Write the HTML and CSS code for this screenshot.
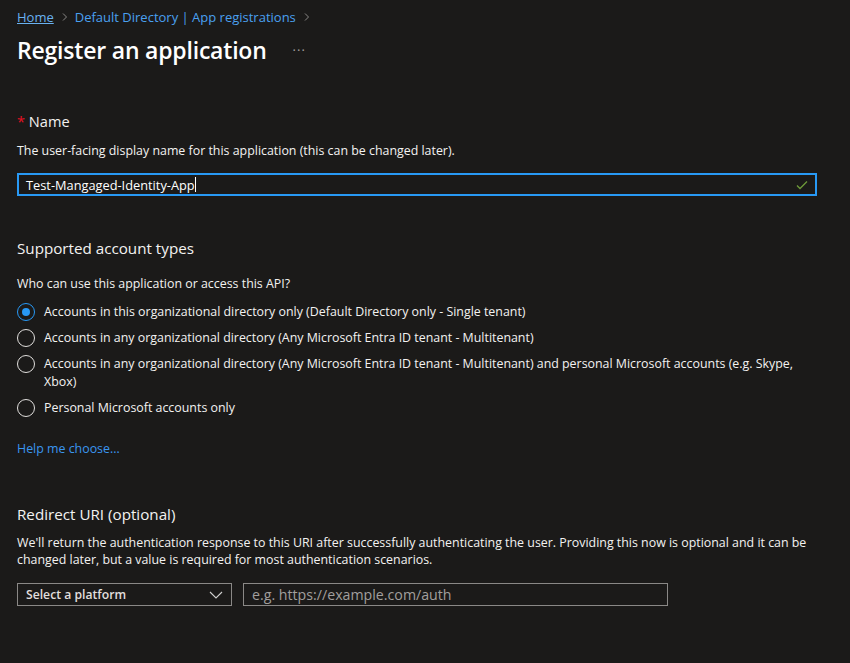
FILE: index.html
```html
<!DOCTYPE html>
<html>
<head>
<meta charset="utf-8">
<link rel="stylesheet" href="styles.css">
</head>
<body>
<div class="page">
  <nav class="crumbs">
    <a class="crumb home" href="#">Home</a>
    <span class="chev"><svg width="8" height="10" viewBox="0 0 8 10"><path d="M2 1.5 L5.5 5 L2 8.5" fill="none" stroke="#8a8886" stroke-width="1"/></svg></span>
    <a class="crumb" href="#">Default Directory | App registrations</a>
    <span class="chev"><svg width="8" height="10" viewBox="0 0 8 10"><path d="M2 1.5 L5.5 5 L2 8.5" fill="none" stroke="#8a8886" stroke-width="1"/></svg></span>
  </nav>
  <header class="titlebar">
    <h1 class="title">Register an application</h1>
    <span class="more">···</span>
  </header>

  <section class="sec name-sec">
    <h2 class="label"><span class="req">*</span> Name</h2>
    <p class="desc">The user-facing display name for this application (this can be changed later).</p>
    <div class="textbox focused">
      <span class="value">Test-Mangaged-Identity-App</span><span class="caret"></span>
      <svg class="check" width="12" height="10" viewBox="0 0 12 10"><path d="M1 5.5 L4 8.5 L11 1.5" fill="none" stroke="#6e9a3a" stroke-width="1.3"/></svg>
    </div>
  </section>

  <section class="sec acct-sec">
    <h2 class="heading">Supported account types</h2>
    <p class="desc q">Who can use this application or access this API?</p>
    <div class="radios">
      <label class="radio"><span class="dot checked"></span><span class="rtext">Accounts in this organizational directory only (Default Directory only - Single tenant)</span></label>
      <label class="radio"><span class="dot"></span><span class="rtext">Accounts in any organizational directory (Any Microsoft Entra ID tenant - Multitenant)</span></label>
      <label class="radio"><span class="dot"></span><span class="rtext">Accounts in any organizational directory (Any Microsoft Entra ID tenant - Multitenant) and personal Microsoft accounts (e.g. Skype, Xbox)</span></label>
      <label class="radio"><span class="dot"></span><span class="rtext">Personal Microsoft accounts only</span></label>
    </div>
    <a class="link help" href="#">Help me choose...</a>
  </section>

  <section class="sec redirect-sec">
    <h2 class="heading">Redirect URI (optional)</h2>
    <p class="desc para">We'll return the authentication response to this URI after successfully authenticating the user. Providing this now is optional and it can be changed later, but a value is required for most authentication scenarios.</p>
    <div class="uri-row">
      <div class="select">
        <span>Select a platform</span>
        <svg width="14" height="8" viewBox="0 0 14 8"><path d="M1 1 L7 7 L13 1" fill="none" stroke="#d0d0d0" stroke-width="1.1"/></svg>
      </div>
      <div class="textbox uri"><span class="placeholder">e.g. https://example.com/auth</span></div>
    </div>
  </section>
</div>
</body>
</html>
```

FILE: styles.css
```css
* { box-sizing: border-box; }
html, body { margin: 0; padding: 0; }
body {
  background: #1b1a19;
  color: #f3f2f1;
  font-family: "Open Sans", "Noto Sans", sans-serif;
  font-size: 12.4px;
  width: 850px;
  height: 663px;
  overflow: hidden;
}
.page { padding: 0 17px; }
.crumbs {
  display: flex;
  align-items: center;
  height: 17px;
  margin-top: 8px;
  font-size: 13px;
}
.crumb { color: #4aa0f0; text-decoration: none; }
.crumb.home { color: #69b1f0; text-decoration: underline; }
.chev { display: flex; margin: 0 6px 0 7px; }
.titlebar {
  display: flex;
  align-items: center;
  margin-top: 9px;
  height: 32px;
}
.title {
  margin: 0;
  font-size: 23px;
  font-weight: 600;
  color: #ffffff;
  letter-spacing: -0.2px;
}
.more { color: #a19f9d; margin-left: 26px; font-size: 13px; letter-spacing: 1px; }

.sec { display: flex; flex-direction: column; align-items: flex-start; }
.name-sec { margin-top: 45px; }
.label { margin: 0; font-size: 14.6px; font-weight: 400; line-height: 20px; }
.req { color: #e81123; }
.desc { margin: 0; line-height: 18px; }
.name-sec .desc { margin-top: 11px; }
.textbox {
  display: flex;
  align-items: center;
  height: 23px;
  border: 1px solid #8a8886;
  padding: 0 8px;
}
.textbox.focused {
  width: 800px;
  border: 2px solid #2899f5;
  margin-top: 13px;
  padding-left: 7px;
}
.value { color: #ffffff; font-size: 12.8px; }
.caret { width: 1px; height: 15px; background: #fff; }
.check { margin-left: auto; margin-right: -1px; }

.acct-sec { margin-top: 41px; }
.heading { margin: 0; font-size: 15.2px; font-weight: 400; line-height: 22px; }
.q { margin-top: 16px; }
.radios { display: flex; flex-direction: column; gap: 8px; margin-top: 10px; width: 800px; }
.radio { display: flex; align-items: flex-start; gap: 9px; line-height: 18px; }
.dot {
  flex: none;
  width: 18px; height: 18px;
  border-radius: 50%;
  border: 1px solid #e1dfdd;
  position: relative;
}
.dot.checked { border-color: #2899f5; }
.dot.checked::after {
  content: "";
  position: absolute;
  left: 4px; top: 4px;
  width: 8px; height: 8px;
  border-radius: 50%;
  background: #2899f5;
}
.link { color: #3a96f0; text-decoration: none; }
.help { margin-top: 23px; line-height: 18px; }

.redirect-sec { margin-top: 45px; }
.para { margin-top: 9px; line-height: 17px; width: 800px; }
.uri-row { display: flex; gap: 11px; margin-top: 15px; }
.select {
  width: 215px; height: 23px;
  border: 1px solid #8a8886;
  display: flex; align-items: center; justify-content: space-between;
  padding: 0 8px;
  color: #e1dfdd;
  font-weight: 600;
  font-size: 12.2px;
}
.uri { width: 425px; }
.placeholder { color: #a19f9d; font-size: 14.2px; }
```
